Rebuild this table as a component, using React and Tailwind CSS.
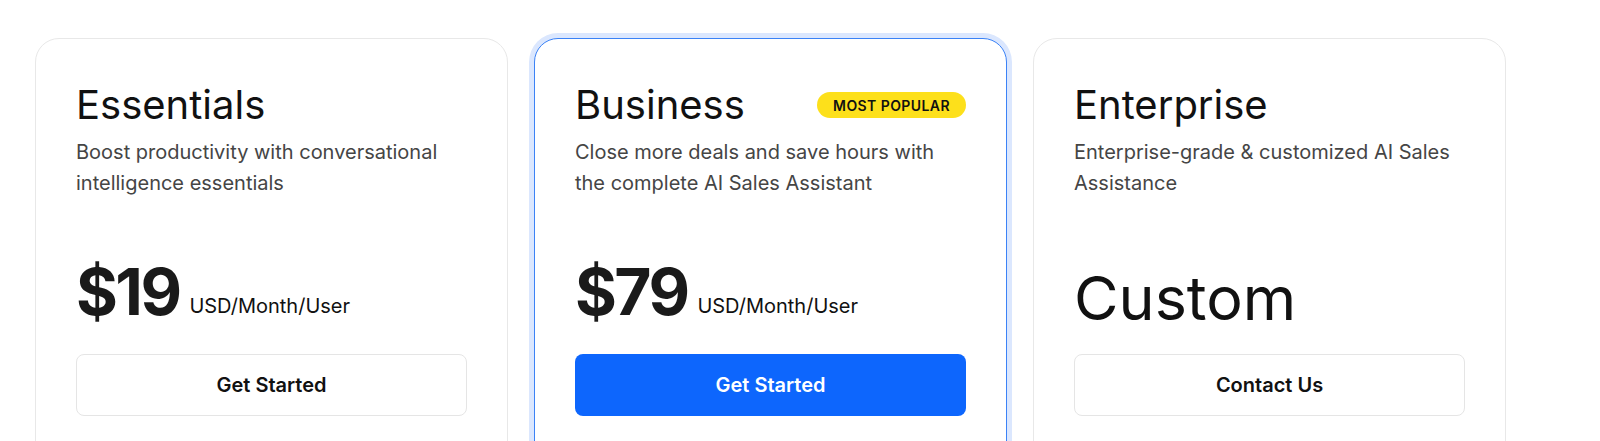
import React from 'react';

const plans = [
  {
    name: 'Essentials',
    desc: 'Boost productivity with conversational intelligence essentials',
    price: '$19',
    cta: 'Get Started',
  },
  {
    name: 'Business',
    desc: 'Close more deals and save hours with the complete AI Sales Assistant',
    price: '$79',
    cta: 'Get Started',
    popular: true,
  },
  {
    name: 'Enterprise',
    desc: 'Enterprise-grade & customized AI Sales Assistance',
    custom: true,
    cta: 'Contact Us',
  },
];

function PlanCard({ plan }) {
  return (
    <div
      className={
        plan.popular
          ? 'w-[473px] h-[460px] shrink-0 rounded-[24px] border border-[#3b82f6] bg-white ring-[5px] ring-[#dbe7fe] px-10 pt-[42px]'
          : 'w-[473px] h-[460px] shrink-0 rounded-[24px] border border-[#e8e8e8] bg-white px-10 pt-[42px]'
      }
    >
      <div className="flex items-center justify-between">
        <h2 className="text-[40px] leading-[48px] font-normal text-[#111]">{plan.name}</h2>
        {plan.popular && (
          <span className="h-[26px] px-[16px] flex items-center rounded-full bg-[#fde01b] text-[14px] font-semibold tracking-[0.03em] text-[#111] uppercase">
            Most Popular
          </span>
        )}
      </div>
      <p className="mt-[8px] h-[62px] text-[20px] leading-[31px] text-[#454545]">{plan.desc}</p>
      <div className="mt-[61px] h-[64px] flex items-end">
        {plan.custom ? (
          <span className="text-[61px] leading-[64px] font-normal text-[#111] translate-y-[6px]">Custom</span>
        ) : (
          <>
            <span className="text-[64px] leading-[64px] font-bold tracking-[-0.04em] text-[#1a1a1a]">{plan.price}</span>
            <span className="ml-[10px] mb-[6px] text-[20px] leading-[24px] text-[#111]">USD/Month/User</span>
          </>
        )}
      </div>
      <button
        className={
          plan.popular
            ? 'mt-[30px] w-full h-[62px] rounded-[8px] bg-[#0d66fd] text-white text-[20px] font-semibold'
            : 'mt-[30px] w-full h-[62px] rounded-[8px] border border-[#e5e5e5] bg-white text-[#111] text-[20px] font-semibold'
        }
      >
        {plan.cta}
      </button>
    </div>
  );
}

export default function App() {
  return (
    <div className="w-[1600px] h-[441px] overflow-hidden bg-white font-['Inter',sans-serif]">
      <div className="flex gap-[26px] pl-[35px] pt-[38px]">
        {plans.map((p) => (
          <PlanCard key={p.name} plan={p} />
        ))}
      </div>
    </div>
  );
}
